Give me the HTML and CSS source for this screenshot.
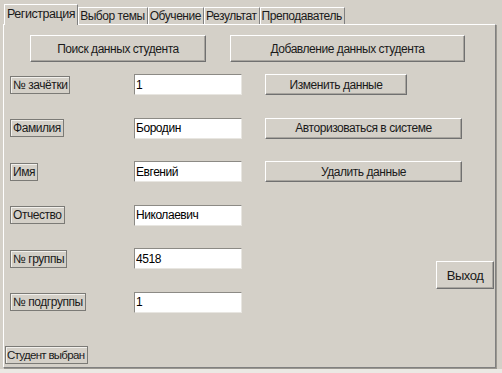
FILE: index.html
```html
<!DOCTYPE html>
<html>
<head>
    <meta charset="utf-8">
    <title>Регистрация</title>
    <link rel="stylesheet" href="styles.css">
</head>
<body>
    <div class="window">
        <!-- вкладки -->
        <div class="tabs">
            <div class="tab active">Регистрация</div>
            <div class="tab">Выбор темы</div>
            <div class="tab">Обучение</div>
            <div class="tab">Результат</div>
            <div class="tab">Преподаватель</div>
        </div>

        <div class="page">
            <div class="top-buttons">
                <button class="btn btn-search">Поиск данных студента</button>
                <button class="btn btn-add">Добавление данных студента</button>
            </div>

            <div class="form">
                <span class="label">№ зачётки</span>
                <input class="field" value="1">
                <button class="btn btn-edit">Изменить данные</button>

                <span class="label">Фамилия</span>
                <input class="field" value="Бородин">
                <button class="btn btn-wide">Авторизоваться в системе</button>

                <span class="label">Имя</span>
                <input class="field" value="Евгений">
                <button class="btn btn-wide">Удалить данные</button>

                <span class="label">Отчество</span>
                <input class="field" value="Николаевич">

                <span class="label">№ группы</span>
                <input class="field" value="4518">

                <span class="label">№ подгруппы</span>
                <input class="field" value="1">

                <button class="btn btn-exit">Выход</button>
            </div>

            <span class="label status">Студент выбран</span>
        </div>
    </div>
</body>
</html>
```

FILE: styles.css
```css
html {
    background: #ebe9e4;
}
body {
    margin: 0;
    font-family: "Liberation Sans", Arial, sans-serif;
    font-size: 12px;
    letter-spacing: -0.45px;
    color: #1a1a1a;
}
.window {
    background: #d4d0c8;
    height: 369px;
    padding-top: 4px;
    box-sizing: border-box;
}

/* вкладки */
.tabs {
    display: flex;
    align-items: flex-end;
    margin-left: 4px;
    height: 20px;
    position: relative;
    z-index: 1;
}
.tab {
    height: 17px;
    line-height: 16px;
    padding: 0 2px 0 1px;
    border: 1px solid #fff;
    border-right-color: #808080;
    border-bottom: none;
    box-sizing: border-box;
}
.tab.active {
    height: 21px;
    line-height: 19px;
    margin-bottom: -1px;
    padding: 0 2px;
    background: #d4d0c8;
    font-size: 12.5px;
}

.page {
    display: flex;
    flex-direction: column;
    margin-left: 3px;
    width: 493px;
    height: 344px;
    box-sizing: border-box;
    border: 1px solid #fff;
    border-right-color: #808080;
    border-bottom-color: #808080;
    box-shadow: 1px 1px 0 #9a9790;
}

.top-buttons {
    display: flex;
    gap: 24px;
    margin: 10px 0 0 26px;
}

.btn {
    font: inherit;
    letter-spacing: inherit;
    color: #1a1a1a;
    background: #d4d0c8;
    border: 1px solid;
    border-color: #fff #707070 #707070 #fff;
    box-shadow: inset -1px -1px 0 #a8a59f;
    padding: 0;
    height: 21px;
}
.btn-search {
    width: 176px;
    height: 27px;
}
.btn-add {
    width: 235px;
    height: 27px;
}

.form {
    display: grid;
    grid-template-columns: 124px 131px 171px 58px;
    grid-auto-rows: 21px;
    row-gap: 22.5px;
    margin: 12px 0 0 6px;
}
.label {
    align-self: center;
    justify-self: start;
    height: 18px;
    line-height: 16px;
    padding: 0 2px;
    box-sizing: border-box;
    border: 1px solid #7b7a76;
    box-shadow: inset 1px 1px 0 #f2f0ec;
}
.form .label {
    grid-column: 1;
}
.field {
    grid-column: 2;
    width: 108px;
    height: 21px;
    box-sizing: border-box;
    font: inherit;
    letter-spacing: inherit;
    color: #000;
    padding: 0 1px;
    background: #fff;
    border: 1px solid;
    border-color: #8c8a85 #e8e6e1 #e8e6e1 #8c8a85;
    outline: none;
}
.btn-edit {
    grid-column: 3;
    width: 142px;
}
.btn-wide {
    width: 197px;
    grid-column: 3 / span 2;
}
.btn-exit {
    grid-column: 4;
    grid-row: 5 / span 2;
    align-self: start;
    margin-top: 13px;
    width: 58px;
    height: 28px;
    font-size: 13px;
}

.status {
    margin: auto 0 3px 1px;
    align-self: flex-start;
    padding: 0 3px 0 1px;
    font-size: 11.5px;
    letter-spacing: -0.7px;
}
```
